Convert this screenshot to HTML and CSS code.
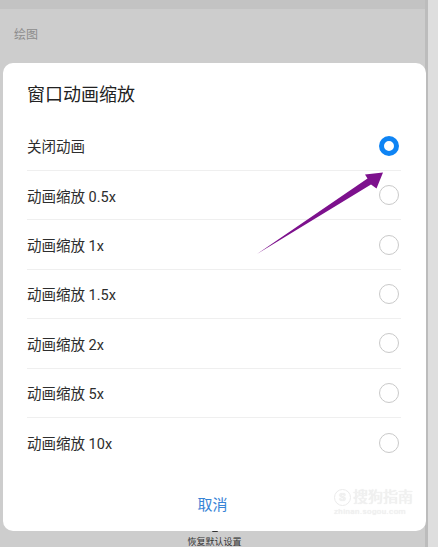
FILE: index.html
```html
<!DOCTYPE html>
<html lang="zh-CN">
<head>
    <meta charset="UTF-8">
    <meta name="viewport" content="width=device-width, initial-scale=1.0">
    <title>窗口动画缩放</title>
    <link rel="stylesheet" href="styles.css">
</head>
<body>

    <div class="screen">
        <!-- Settings page behind the dialog -->
        <div class="page">
            <div class="topbar"></div>
            <div class="section">绘图</div>
            <div class="bottom-item">
                <span class="bottom-icon"></span>
                <span class="bottom-label">恢复默认设置</span>
            </div>
        </div>
        <div class="scrollbar"></div>

        <!-- Animation scale dialog -->
        <div class="dialog">
            <div class="dialog-title">窗口动画缩放</div>
            <div class="options">
                <div class="option"><span>关闭动画</span><span class="radio checked"></span></div>
                <div class="option"><span>动画缩放 0.5x</span><span class="radio"></span></div>
                <div class="option"><span>动画缩放 1x</span><span class="radio"></span></div>
                <div class="option"><span>动画缩放 1.5x</span><span class="radio"></span></div>
                <div class="option"><span>动画缩放 2x</span><span class="radio"></span></div>
                <div class="option"><span>动画缩放 5x</span><span class="radio"></span></div>
                <div class="option"><span>动画缩放 10x</span><span class="radio"></span></div>
            </div>
            <div class="dialog-footer">
                <span class="cancel">取消</span>
                <div class="watermark">
                    <div class="wm-top"><span class="wm-logo">S</span><span>搜狗指南</span></div>
                    <div class="wm-url">zhinan.sogou.com</div>
                </div>
            </div>
        </div>

        <!-- Purple pointer arrow -->
        <svg class="arrow" width="438" height="547" viewBox="0 0 438 547">
            <polygon points="257,254 371,184.5 376.5,188.5 383,172.5 365,174.5 367.5,178.5" fill="#7d118d"/>
        </svg>
    </div>

</body>
</html>
```

FILE: styles.css
```css
body {
    margin: 0;
    font-family: Roboto, "Noto Sans CJK SC", sans-serif;
    background: #cccccc;
}

.screen {
    position: relative;
    width: 438px;
    height: 547px;
    overflow: hidden;
    display: flex;
}

.page {
    flex: 1;
    display: flex;
    flex-direction: column;
    background: #cdcdcd;
}

.topbar {
    height: 9px;
    background: #c3c3c3;
}

.section {
    padding: 17px 0 0 14px;
    font-size: 12px;
    line-height: 18px;
    color: #8c8c8c;
}

.bottom-item {
    margin-top: auto;
    display: flex;
    flex-direction: column;
    align-items: center;
    padding-left: 4px;
}

.bottom-icon {
    width: 6px;
    height: 2px;
    background: #333;
    border-radius: 1px;
    margin-bottom: 5px;
}

.bottom-label {
    font-size: 9px;
    line-height: 10px;
    color: #333;
}

.scrollbar {
    width: 10px;
    border-left: 3px solid #bcbcbc;
    background: #dedede;
}

/* Dialog */
.dialog {
    position: absolute;
    left: 3px;
    top: 63px;
    width: 423px;
    height: 468px;
    background: #fff;
    border-radius: 10px;
    display: flex;
    flex-direction: column;
}

.dialog-title {
    padding: 20px 24px 0;
    height: 38.6px;
    font-size: 18px;
    line-height: 24px;
    color: #222;
}

.options {
    padding: 0 25px 0 24px;
}

.option {
    height: 49.4px;
    box-sizing: border-box;
    display: flex;
    align-items: center;
    justify-content: space-between;
    font-size: 14.5px;
    color: #2e2e2e;
    border-bottom: 1px solid #efefef;
    padding-right: 2px;
}

.option:last-child {
    border-bottom: none;
}

.radio {
    width: 20px;
    height: 20px;
    box-sizing: border-box;
    border-radius: 50%;
    border: 1.5px solid #c9c9c9;
}

.radio.checked {
    border: 5.5px solid #0f84f4;
}

.dialog-footer {
    position: relative;
    flex: 1;
    display: flex;
    justify-content: center;
    align-items: center;
    padding-top: 8px;
}

.cancel {
    font-size: 15px;
    color: #3784d6;
    padding-right: 4px;
}

.watermark {
    position: absolute;
    right: 13px;
    top: 21px;
    color: #f1f1f1;
    text-shadow: 0 0 1px #e2e2e2;
}

.wm-top {
    display: flex;
    align-items: center;
    gap: 2px;
    font-size: 15px;
    line-height: 18px;
}

.wm-logo {
    width: 15px;
    height: 15px;
    border-radius: 50%;
    border: 1.5px solid #ebebeb;
    font-size: 11px;
    line-height: 15px;
    text-align: center;
    font-weight: bold;
}

.wm-url {
    font-size: 8px;
    line-height: 12px;
    letter-spacing: 0.4px;
}

.arrow {
    position: absolute;
    left: 0;
    top: 0;
    pointer-events: none;
}
```
